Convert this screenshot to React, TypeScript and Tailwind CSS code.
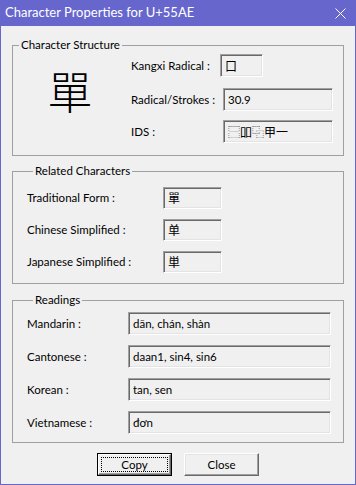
import React from "react";

const FONT = 'Lato, "Noto Sans CJK TC", sans-serif';
const CJK = '"Noto Sans CJK TC", "Noto Sans CJK SC", sans-serif';

const sunken =
  "border border-t-[#a0a0a0] border-l-[#a0a0a0] border-b-white border-r-white shadow-[inset_1px_1px_0_#696969,inset_-1px_-1px_0_#e3e3e3] bg-[#f0f0f0] flex items-center pl-[4px] text-[11.5px] text-black";

function Group({ title, children, className }: { title: string; children: React.ReactNode; className: string }) {
  return (
    <fieldset className={"border border-[#a0a0a0] " + className}>
      <legend className="ml-[6px] px-[2px] leading-[16px] text-[11.5px] text-black">{title}</legend>
      {children}
    </fieldset>
  );
}

function Row({ label, labelW, boxW, value, cjk, h }: { label: string; labelW: string; boxW: string; value: string; cjk?: boolean; h: string }) {
  return (
    <div className="flex items-center">
      <div className={labelW + " text-[11.5px] text-black whitespace-nowrap"}>{label}</div>
      <div className={sunken + " " + boxW + " " + h} style={cjk ? { fontFamily: CJK, fontSize: "12px" } : undefined}>
        {value}
      </div>
    </div>
  );
}

export default function App() {
  return (
    <div className="w-[356px] h-[485px] bg-[#6666cc] flex flex-col" style={{ fontFamily: FONT }}>
      <div className="h-[26px] flex items-center justify-between pl-[5px] pr-[10px] text-white text-[13px]">
        <span>Character Properties for U+55AE</span>
        <svg width="11" height="11" viewBox="0 0 11 11">
          <path d="M0.5 0.5 L10.5 10.5 M10.5 0.5 L0.5 10.5" stroke="white" strokeWidth="1" />
        </svg>
      </div>
      <div className="flex-1 mx-[1px] mb-[1px] bg-[#f0f0f0] px-[11px] flex flex-col">
        <Group title="Character Structure" className="mt-[11px] pb-[11px] h-[119px]">
          <div className="flex">
            <div className="w-[118px] flex justify-center pt-[13px]">
              <span className="text-[45px] leading-[50px] text-black pr-[4px]" style={{ fontFamily: CJK, fontWeight: 200 }}>單</span>
            </div>
            <div className="flex flex-col pt-[1px]">
              <Row label="Kangxi Radical :" labelW="w-[89px]" boxW="w-[43px]" h="h-[23px]" value="口" cjk />
              <div className="h-[11px]" />
              <Row label="Radical/Strokes :" labelW="w-[92px]" boxW="w-[110px]" h="h-[23px]" value="30.9" />
              <div className="h-[9px]" />
              <Row label="IDS :" labelW="w-[92px]" boxW="w-[110px]" h="h-[23px]" value="⿱吅⿻甲一" cjk />
            </div>
          </div>
        </Group>
        <Group title="Related Characters" className="mt-[7px] pl-[14px] h-[121px]">
          <div className="flex flex-col pt-[8px] gap-[10px]">
            <Row label="Traditional Form :" labelW="w-[136px]" boxW="w-[59px]" h="h-[22px]" value="單" cjk />
            <Row label="Chinese Simplified :" labelW="w-[136px]" boxW="w-[59px]" h="h-[22px]" value="单" cjk />
            <Row label="Japanese Simplified :" labelW="w-[136px]" boxW="w-[59px]" h="h-[22px]" value="単" cjk />
          </div>
        </Group>
        <Group title="Readings" className="mt-[8px] pl-[14px] h-[151px]">
          <div className="flex flex-col pt-[4px] gap-[10px]">
            <Row label="Mandarin :" labelW="w-[101px]" boxW="w-[203px]" h="h-[23px]" value="dān, chán, shàn" />
            <Row label="Cantonese :" labelW="w-[101px]" boxW="w-[203px]" h="h-[23px]" value="daan1, sin4, sin6" />
            <Row label="Korean :" labelW="w-[101px]" boxW="w-[203px]" h="h-[23px]" value="tan, sen" />
            <Row label="Vietnamese :" labelW="w-[101px]" boxW="w-[203px]" h="h-[23px]" value="đơn" />
          </div>
        </Group>
        <div className="flex justify-center gap-[12px] mt-[10px]">
          <button className="w-[75px] h-[23px] border border-black bg-[#f0f0f0] p-0 text-[11.5px] text-black">
            <div className="w-full h-full border border-t-white border-l-white border-b-[#696969] border-r-[#696969] shadow-[inset_-1px_-1px_0_#a0a0a0] p-[2px]">
              <div className="w-full h-full border border-dotted border-black flex items-center justify-center">Copy</div>
            </div>
          </button>
          <button className="w-[75px] h-[23px] border border-t-white border-l-white border-b-[#696969] border-r-[#696969] shadow-[inset_-1px_-1px_0_#a0a0a0,inset_1px_1px_0_#e3e3e3] bg-[#f0f0f0] p-0 text-[11.5px] text-black flex items-center justify-center">
            Close
          </button>
        </div>
      </div>
    </div>
  );
}
